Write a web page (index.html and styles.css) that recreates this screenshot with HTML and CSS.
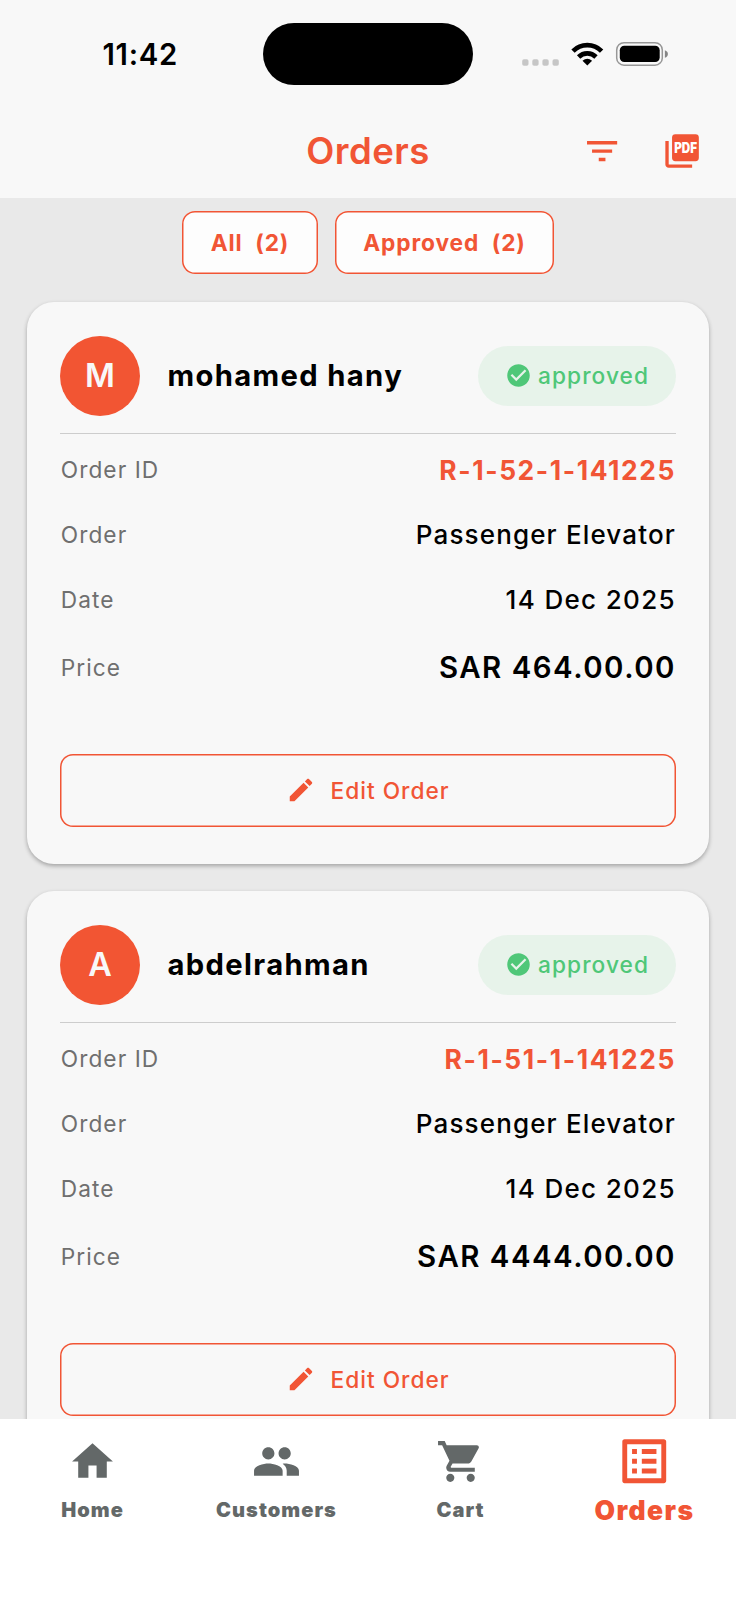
FILE: index.html
```html
<!DOCTYPE html>
<html lang="en">
<head>
<meta charset="utf-8">
<title>Orders</title>
<link rel="stylesheet" href="styles.css">
</head>
<body>
<svg class="defs" width="0" height="0" aria-hidden="true">
  <symbol id="i-check" viewBox="0 0 24 24"><path d="M12 2C6.480 2 2 6.480 2 12s4.480 10 10 10 10-4.480 10-10S17.520 2 12 2zm-2 15l-5-5 1.410-1.410L10 14.170l7.590-7.590L19 8l-9 9z"/></symbol>
  <symbol id="i-edit" viewBox="0 0 24 24"><path d="M3 17.250V21h3.750L17.810 9.940l-3.750-3.750L3 17.250zM20.710 7.040c.39-.39.39-1.020 0-1.410l-2.340-2.340c-.39-.39-1.020-.39-1.410 0l-1.830 1.830 3.750 3.750 1.830-1.830z"/></symbol>
</svg>
<div class="app">
  <header class="top">
    <div class="status">
      <span class="time">11:42</span>
      <div class="island"></div>
      <svg class="indicators" width="263" height="62" viewBox="473 23 263 62" aria-hidden="true">
        <g fill="#c6c6c6"><rect x="522.2" y="59.200" width="6.300" height="6.500" rx="1.800"/><rect x="532.3" y="59.200" width="6.300" height="6.500" rx="1.800"/><rect x="542.4" y="59.200" width="6.300" height="6.500" rx="1.800"/><rect x="552.5" y="59.200" width="6.300" height="6.500" rx="1.800"/></g>
        <g fill="none" stroke="#000" stroke-width="4.700"><path d="M573 51.100A20.200 20.200 0 0 1 601.600 51.100"/><path d="M578.600 57A12.400 12.400 0 0 1 596 57"/></g>
        <path d="M582.500 60.700Q587.300 56.800 592.100 60.700L587.300 65.500Z"/>
        <rect x="616.700" y="42.700" width="45.600" height="22.500" rx="7.300" fill="none" stroke="#979797" stroke-width="1.500"/>
        <rect x="619.800" y="45.800" width="39.900" height="16.300" rx="4.500"/>
        <path d="M664.900 50.200Q667.900 51.300 667.900 54T664.900 57.800Z" fill="#858585"/>
      </svg>
    </div>
    <div class="bar">
      <h1 class="title">Orders</h1>
      <div class="actions">
        <svg class="action" viewBox="0 0 24 24"><path d="M10 18h4v-2h-4v2zM3 6v2h18V6H3zm3 7h12v-2H6v2z"/></svg>
        <svg class="action" viewBox="0 0 24 24"><rect x="6" y="2" width="16" height="16" rx="2"/><path d="M4 6H2v14c0 1.100.9 2 2 2h14v-2H4V6z"/><text class="pdf" x="7.250" y="13.200" textLength="13.700" lengthAdjust="spacingAndGlyphs">PDF</text></svg>
      </div>
    </div>
  </header>

  <main class="content">
    <div class="filters">
      <button class="chip chip-all">All  (2)</button>
      <button class="chip chip-approved">Approved  (2)</button>
    </div>

    <article class="card">
      <div class="customer">
        <span class="avatar">M</span>
        <h2 class="name">mohamed hany</h2>
        <span class="badge"><svg class="check"><use href="#i-check"/></svg>approved</span>
      </div>
      <dl class="rows">
        <div class="row"><dt>Order ID</dt><dd class="id">R-1-52-1-141225</dd></div>
        <div class="row"><dt>Order</dt><dd>Passenger Elevator</dd></div>
        <div class="row"><dt>Date</dt><dd class="date">14 Dec 2025</dd></div>
        <div class="row row-price"><dt>Price</dt><dd class="price">SAR 464.00.00</dd></div>
      </dl>
      <button class="edit"><svg class="pencil"><use href="#i-edit"/></svg>Edit Order</button>
    </article>

    <article class="card">
      <div class="customer">
        <span class="avatar">A</span>
        <h2 class="name">abdelrahman</h2>
        <span class="badge"><svg class="check"><use href="#i-check"/></svg>approved</span>
      </div>
      <dl class="rows">
        <div class="row"><dt>Order ID</dt><dd class="id">R-1-51-1-141225</dd></div>
        <div class="row"><dt>Order</dt><dd>Passenger Elevator</dd></div>
        <div class="row"><dt>Date</dt><dd class="date">14 Dec 2025</dd></div>
        <div class="row row-price"><dt>Price</dt><dd class="price">SAR 4444.00.00</dd></div>
      </dl>
      <button class="edit"><svg class="pencil"><use href="#i-edit"/></svg>Edit Order</button>
    </article>
  </main>

  <nav class="nav">
    <a class="tab"><span class="tab-icon"><svg viewBox="0 0 24 24"><path d="M10 20v-6h4v6h5v-8h3L12 3 2 12h3v8z"/></svg></span><span class="label">Home</span></a>
    <a class="tab"><span class="tab-icon"><svg viewBox="0 0 24 24"><path d="M16 11c1.660 0 2.990-1.340 2.990-3S17.660 5 16 5c-1.660 0-3 1.340-3 3s1.340 3 3 3zm-8 0c1.660 0 2.990-1.340 2.990-3S9.660 5 8 5C6.340 5 5 6.340 5 8s1.340 3 3 3zm0 2c-2.330 0-7 1.170-7 3.500V19h14v-2.500c0-2.330-4.670-3.500-7-3.500zm8 0c-.29 0-.62.020-.97.050 1.160.84 1.970 1.970 1.970 3.450V19h6v-2.500c0-2.330-4.670-3.500-7-3.500z"/></svg></span><span class="label">Customers</span></a>
    <a class="tab"><span class="tab-icon"><svg viewBox="0 0 24 24"><path d="M7 18c-1.100 0-1.990.9-1.990 2S5.900 22 7 22s2-.9 2-2-.9-2-2-2zM1 2v2h2l3.600 7.590-1.350 2.450c-.16.28-.25.610-.25.960 0 1.100.9 2 2 2h12v-2H7.420c-.14 0-.25-.11-.25-.25l.03-.12.9-1.630h7.450c.75 0 1.410-.41 1.750-1.030l3.580-6.490c.08-.14.12-.31.120-.48 0-.55-.45-1-1-1H5.210l-.94-2H1zm16 16c-1.100 0-1.990.9-1.990 2s.89 2 1.990 2 2-.9 2-2-.9-2-2-2z"/></svg></span><span class="label">Cart</span></a>
    <a class="tab active"><span class="tab-icon"><svg viewBox="0 0 24 24"><path d="M19 5v14H5V5h14m1.100-2H3.900c-.5 0-.9.4-.9.9v16.200c0 .4.400.9.9.9h16.200c.4 0 .9-.5.9-.9V3.900c0-.5-.5-.9-.9-.9zM11 7h6v2h-6V7zm0 4h6v2h-6v-2zm0 4h6v2h-6zM7 7h2v2H7zm0 4h2v2H7zm0 4h2v2H7z"/></svg></span><span class="label">Orders</span></a>
  </nav>
</div>
</body>
</html>
```
FILE: styles.css
```css
* { box-sizing: border-box; margin: 0; }
body { font-family: Inter, "Liberation Sans", sans-serif; color: #000; }
button { font-family: inherit; border: 0; padding: 0; }
.defs { display: block; }

.app {
  --accent: #f15535;
  display: flex;
  flex-direction: column;
  width: 736px;
  height: 1600px;
  background: #e9e9e9;
  overflow: hidden;
}

.top { flex: none; height: 197.5px; background: #f8f8f8; padding-top: 23px; }
.status { display: grid; grid-template-columns: 263px 210px 263px; height: 85px; }
.time { padding-left: 102.5px; font-size: 29.3px; font-weight: 600; letter-spacing: 0.7px; line-height: 63px; }
.island { height: 62px; border-radius: 31px; background: #000; }
.indicators { display: block; }

.bar { display: grid; grid-template-columns: 1fr auto 1fr; align-items: center; height: 86px; }
.title { grid-column: 2; color: var(--accent); font-size: 36.5px; font-weight: 600; letter-spacing: 0.5px; line-height: 44px; }
.actions { display: flex; justify-content: flex-end; gap: 40px; padding-right: 34px; }
.action { display: block; width: 40.2px; height: 40.2px; fill: var(--accent); }
.pdf { font-size: 8.3px; font-weight: 900; fill: #fff; }

.content { flex: 1; min-height: 0; overflow: hidden; padding: 13.5px 27px 0; }
.filters { display: flex; justify-content: center; gap: 17px; height: 90.5px; }
.chip {
  height: 63px;
  border-radius: 13px;
  background: #fdfdfd;
  box-shadow: inset 0 0 0 1.5px var(--accent);
  color: var(--accent);
  font-size: 22.7px;
  font-weight: 700;
  letter-spacing: 0.9px;
  white-space: pre;
}
.chip-all { width: 136px; }
.chip-approved { width: 219px; }

.card {
  height: 562.5px;
  margin-bottom: 26.5px;
  padding: 33px 33px 0;
  border-radius: 27px;
  background: #f8f8f8;
  box-shadow: 0 2px 4px rgba(0, 0, 0, 0.3);
}
.customer { display: flex; align-items: center; height: 98px; padding: 1px 0 17px; }
.avatar {
  width: 80px;
  height: 80px;
  border-radius: 50%;
  background: #f25533;
  color: #f8f8f8;
  font-size: 32.4px;
  font-weight: 600;
  line-height: 80px;
  text-align: center;
}
.name { flex: 1; padding-left: 27.5px; font-size: 29.2px; font-weight: 700; line-height: 36px; letter-spacing: 1.35px; }
.badge {
  display: flex;
  align-items: center;
  width: 198px;
  height: 60px;
  padding-left: 26.5px;
  border-radius: 30px;
  background: #e7f3ea;
  color: #4fc778;
  font-size: 22.7px;
  font-weight: 500;
  letter-spacing: 1.07px;
}
.check { width: 27px; height: 27px; margin-right: 6.5px; fill: #4fc778; }

.rows { border-top: 1px solid #cdcdcd; padding-top: 3.5px; }
.row { display: flex; align-items: center; justify-content: space-between; height: 65.2px; }
.row-price { height: 70.5px; }
dt { padding-left: 0.8px; color: #6f6f6f; font-size: 22.7px; letter-spacing: 1.05px; }
dd { font-size: 26px; font-weight: 500; letter-spacing: 1.15px; }
.date { letter-spacing: 1.34px; }
.id { color: var(--accent); font-size: 26.4px; font-weight: 700; letter-spacing: 1.6px; }
.price { font-size: 29.4px; font-weight: 600; letter-spacing: 1.5px; }

.edit {
  display: flex;
  align-items: center;
  justify-content: center;
  gap: 14px;
  width: 100%;
  height: 73px;
  margin-top: 50.5px;
  border-radius: 13px;
  background: transparent;
  box-shadow: inset 0 0 0 1.5px var(--accent);
  color: var(--accent);
  font-size: 22.7px;
  font-weight: 500;
  letter-spacing: 1px;
}
.pencil { width: 30px; height: 30px; fill: var(--accent); }

.nav { flex: none; display: grid; grid-template-columns: repeat(4, 1fr); height: 181.5px; padding-top: 13px; background: #fff; }
.tab { display: flex; flex-direction: column; align-items: center; color: #636868; }
.tab-icon { display: grid; place-items: center; height: 59px; }
.tab-icon svg { width: 49px; height: 49px; fill: currentColor; }
.label { padding-left: 1px; font-size: 20px; font-weight: 900; letter-spacing: 1.05px; line-height: 38px; }
.active { color: var(--accent); }
.active .tab-icon svg { width: 58.5px; height: 58.5px; }
.active .label { font-size: 26.5px; letter-spacing: 1.4px; }
```
